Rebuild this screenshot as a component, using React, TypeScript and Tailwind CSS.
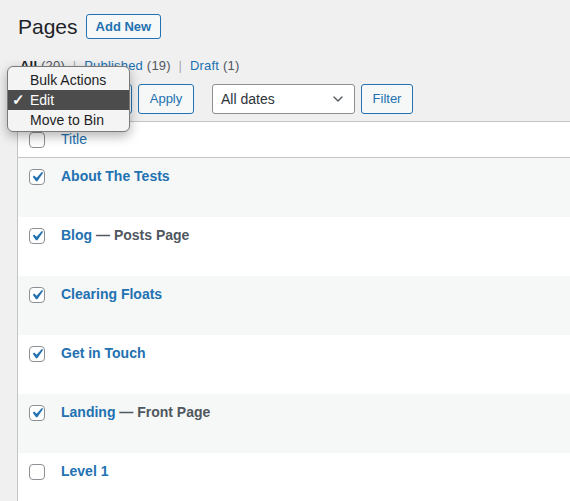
import { ChevronDown } from 'lucide-react';

const pages = [
  { title: 'About The Tests', state: '', checked: true },
  { title: 'Blog', state: 'Posts Page', checked: true },
  { title: 'Clearing Floats', state: '', checked: true },
  { title: 'Get in Touch', state: '', checked: true },
  { title: 'Landing', state: 'Front Page', checked: true },
  { title: 'Level 1', state: '', checked: false },
];

function CheckBox({ checked }: { checked: boolean }) {
  return (
    <span className="relative block w-4 h-4 rounded-[4px] border border-[#8c8f94] bg-white">
      {checked && (
        <svg viewBox="0 0 20 20" className="absolute -left-[3px] -top-[3px] w-5 h-5 overflow-visible">
          <path fill="#2271b1" d="M14.83 4.89l1.34.94-5.81 8.38H9.02L5.78 9.67l1.34-1.25 2.57 2.4z" />
        </svg>
      )}
    </span>
  );
}

export default function App() {
  return (
    <div className="relative w-full h-[501px] overflow-hidden bg-[#f0f0f1] font-['Liberation_Sans',Arial,sans-serif] text-[#3c434a]">
      <div className="pl-[17px]">
        {/* Heading */}
        <div className="flex items-center pt-[14px]">
          <h1 className="ml-[1px] text-[21px] leading-[25px] text-[#1d2327]">Pages</h1>
          <button className="ml-[8px] h-[25px] px-[9px] rounded-[3px] border border-[#2271b1] bg-[#f6f7f7] text-[13px] font-bold text-[#2271b1]">
            Add New
          </button>
        </div>

        {/* Views */}
        <div className="mt-[17px] pl-[3px] text-[13px] leading-[20px] tracking-[0.2px] text-[#50575e]">
          <span className="font-bold text-[#1d2327]">All</span> (20) <span className="mx-[4px] text-[#a7aaad]">|</span>{' '}
          <span className="text-[#2271b1]">Published</span> (19) <span className="mx-[4px] text-[#a7aaad]">|</span>{' '}
          <span className="text-[#2271b1]">Draft</span> (1)
        </div>

        {/* Table nav */}
        <div className="mt-[8px] flex items-center h-[30px]">
          <div className="ml-[1px] w-[114px] h-[30px] rounded-[3px] border border-[#2271b1] bg-white" />
          <button className="ml-[6px] w-[56px] h-[30px] rounded-[3px] border border-[#2271b1] bg-[#f6f7f7] text-[13px] text-[#2271b1]">
            Apply
          </button>
          <div className="ml-[18px] w-[143px] h-[30px] rounded-[3px] border border-[#8c8f94] bg-white flex items-center justify-between pl-[8px] pr-[8px]">
            <span className="text-[14px] text-[#2c3338]">All dates</span>
            <ChevronDown size={16} strokeWidth={2} className="text-[#50575e]" />
          </div>
          <button className="ml-[6px] w-[52px] h-[30px] rounded-[3px] border border-[#2271b1] bg-[#f6f7f7] text-[13px] text-[#2271b1]">
            Filter
          </button>
        </div>

        {/* Table */}
        <div className="mt-[7px] border-l border-t border-[#c3c4c7] bg-white">
          <div className="flex items-center h-[36px] border-b border-[#c3c4c7]">
            <div className="pl-[11px] w-[43px]">
              <CheckBox checked={false} />
            </div>
            <span className="text-[14px] text-[#2271b1]">Title</span>
          </div>
          {pages.map((p, i) => (
            <div key={p.title} className={`flex h-[59px] ${i % 2 === 0 ? 'bg-[#f6f7f7]' : 'bg-white'}`}>
              <div className="pl-[11px] pt-[11px] w-[43px]">
                <CheckBox checked={p.checked} />
              </div>
              <div className="pt-[8px] text-[14px] leading-[20px] font-bold">
                <span className="text-[#2271b1]">{p.title}</span>
                {p.state && <span className="text-[#50575e]"> — {p.state}</span>}
              </div>
            </div>
          ))}
        </div>
      </div>

      {/* Native select popup */}
      <div className="absolute left-[7px] top-[66px] w-[123px] h-[66px] rounded-[6px] border border-[#7a7a7a] bg-[#f4f4f4] shadow-[0_4px_12px_rgba(0,0,0,0.3)] pt-[3px] text-[14px] text-[#1d1d1f]">
        <div className="h-[20px] leading-[20px] pl-[22px]">Bulk Actions</div>
        <div className="h-[20px] leading-[20px] bg-[#4c4c4c] text-white flex items-center">
          <span className="w-[22px] pl-[4px] text-[15px] font-bold">✓</span>
          <span>Edit</span>
        </div>
        <div className="h-[20px] leading-[20px] pl-[22px]">Move to Bin</div>
      </div>
    </div>
  );
}
